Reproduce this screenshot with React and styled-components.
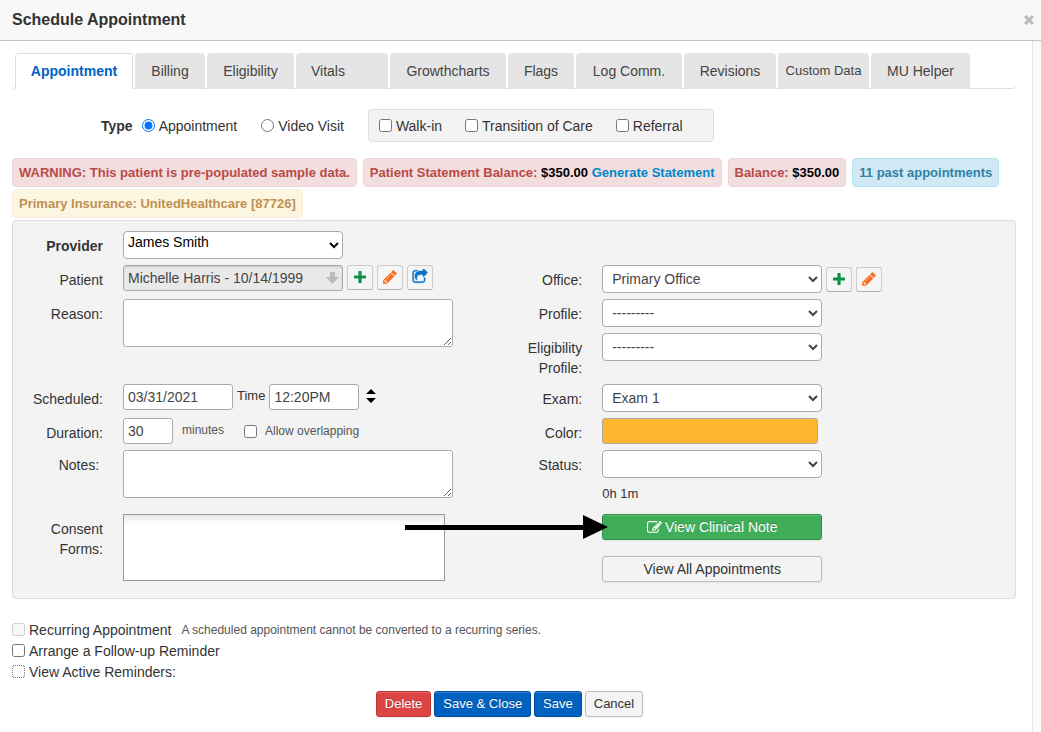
import React from "react";
import styled, { createGlobalStyle, css } from "styled-components";

const GlobalStyle = createGlobalStyle`
  * {
    box-sizing: border-box;
  }
  body {
    margin: 0;
    background: #fff;
    color: #333;
    font: 14px/20px "Liberation Sans", Arial, sans-serif;
  }
  button, input, select, textarea {
    margin: 0;
    font-family: inherit;
  }
`;

const Dialog = styled.div`
  display: flex;
  flex-direction: column;
  min-height: 100vh;
`;

const Header = styled.header`
  display: flex;
  align-items: center;
  justify-content: space-between;
  height: 41px;
  padding: 0 7px 0 12px;
  background: #f8f8f8;
  border-bottom: 1px solid #c4c4c4;
`;

const Title = styled.h1`
  margin: 0;
  font-size: 16px;
  line-height: 20px;
`;

const CloseButton = styled.button`
  display: flex;
  padding: 0;
  border: 0;
  background: none;
  color: #bbb;
`;

const Body = styled.div`
  display: flex;
  flex: 1;
`;

const Content = styled.main`
  flex: 1;
  min-width: 0;
  padding: 12px 16px 14px 12px;
`;

const Gutter = styled.div`
  width: 9px;
  background: #fafafa;
  border-left: 1px solid #e6e6e6;
`;

const Tabs = styled.nav`
  display: flex;
  gap: 2px;
  height: 36px;
  padding-left: 3px;
  border-bottom: 1px solid #ddd;
  border-radius: 0 0 4px 4px;
`;

const Tab = styled.button`
  width: ${(p) => p.$width}px;
  height: 36px;
  padding: 0;
  border: 0;
  border-radius: 4px 4px 0 0;
  background: #e5e5e5;
  color: #444;
  font-size: ${(p) => (p.$small ? 13 : 14)}px;
  line-height: 20px;
  white-space: nowrap;
  ${(p) => p.$loading && css`
    padding-right: 28px;
  `}
  ${(p) => p.$active && css`
    border: 1px solid #ddd;
    border-bottom-color: #fff;
    background: #fff;
    color: #0062c4;
    font-weight: bold;
  `}
`;

const TypeRow = styled.div`
  display: flex;
  align-items: center;
  gap: 24px;
  margin: 20px 0 16px;
  padding-left: 89px;
`;

const TypeGroup = styled.div`
  display: flex;
  align-items: center;
  gap: 9px;
`;

const Choice = styled.label`
  display: flex;
  align-items: center;
  gap: ${(p) => p.$gap || 4}px;
  color: ${(p) => (p.$small ? "#555" : "#333")};
  font-size: ${(p) => (p.$small ? 12 : 14)}px;
  white-space: nowrap;
  input {
    width: 13px;
    height: 13px;
  }
`;

const FlagBox = styled.div`
  display: flex;
  align-items: center;
  gap: 23px;
  height: 33px;
  padding: 0 30px 0 10px;
  border: 1px solid #ddd;
  border-radius: 4px;
  background: #f3f3f3;
`;

const Alerts = styled.div`
  display: flex;
  flex-wrap: wrap;
  gap: 2px 6px;
  margin-bottom: 2px;
`;

const tones = {
  danger: ["#f2dede", "#eed3d7", "#b94a48"],
  info: ["#d0e9f5", "#b0e4ee", "#2f82a6"],
  warning: ["#fcf6e0", "#fbeed5", "#c09053"],
};

const Alert = styled.div`
  height: 29px;
  padding: 0 6px;
  border: 1px solid ${(p) => tones[p.$tone][1]};
  border-radius: 4px;
  background: ${(p) => tones[p.$tone][0]};
  color: ${(p) => tones[p.$tone][2]};
  font-size: 13px;
  font-weight: bold;
  line-height: 27px;
  white-space: nowrap;
  b {
    color: #000;
  }
  a {
    color: #0088cc;
    text-decoration: none;
  }
`;

const Panel = styled.section`
  display: grid;
  grid-template-columns: 11fr 12fr;
  padding: 10px 0 16px;
  border: 1px solid #ddd;
  border-radius: 4px;
  background: #f3f3f3;
`;

const Column = styled.div`
  display: flex;
  flex-direction: column;
  min-width: 0;
  padding-top: ${(p) => p.$top || 0}px;
`;

const Row = styled.div`
  display: flex;
  align-items: flex-start;
  min-height: ${(p) => p.$height || 34}px;
`;

const RowLabel = styled.label`
  flex: none;
  width: 90px;
  margin-right: 20px;
  padding-top: 5px;
  text-align: right;
  font-weight: ${(p) => (p.$bold ? "bold" : "normal")};
`;

const Field = styled.div`
  position: relative;
  display: flex;
  gap: 4px;
`;

const control = css`
  border: 1px solid #aaa;
  border-radius: 4px;
  background: #fff;
  color: #444;
  font-size: 14px;
`;

const Select = styled.select`
  ${control}
  width: 220px;
  height: 28px;
  padding: 0 0 0 5px;
`;

const ProviderSelect = styled(Select)`
  padding: 0 0 6px;
  color: #000;
`;

const TextInput = styled.input`
  ${control}
  width: ${(p) => p.$width}px;
  height: 26px;
  padding: 0 4px;
  border-radius: 3px;
`;

const PatientInput = styled(TextInput)`
  background: #e9e9e9;
  box-shadow: inset 0 1px 2px rgba(0, 0, 0, 0.15);
`;

const PatientBox = styled.div`
  position: relative;
  height: 26px;
  svg {
    position: absolute;
    top: 7px;
    right: 4px;
  }
`;

const TextArea = styled.textarea`
  ${control}
  display: block;
  width: 330px;
  height: 48px;
  border-radius: 3px;
`;

const ConsentList = styled.div`
  width: 322px;
  height: 67px;
  border: 1px solid #999;
  background: #fff;
  box-shadow: inset 0 10px 10px -8px rgba(0, 0, 0, 0.15);
`;

const ColorInput = styled.input`
  width: 216px;
  height: 26px;
  border: 1px solid #aaa;
  border-radius: 3px;
  background: #ffb52e;
`;

const InlineLabel = styled.label`
  font-size: 13px;
  line-height: 24px;
`;

const Minutes = styled.span`
  margin: 0 16px 0 5px;
  color: #555;
  font-size: 12px;
  line-height: 24px;
`;

const Spinner = styled.button`
  display: flex;
  align-items: center;
  height: 24px;
  padding: 0 3px;
  border: 0;
  background: none;
`;

const IconButton = styled.button`
  display: flex;
  align-items: center;
  justify-content: center;
  width: 26px;
  height: 25px;
  margin-top: ${(p) => p.$drop || 0}px;
  padding: 0 0 2px;
  border: 1px solid #ccc;
  border-bottom-color: #b3b3b3;
  border-radius: 3px;
  background: #f5f5f5;
  color: ${(p) => p.$color};
`;

const buttonTones = {
  plain: ["#f4f4f4", "#bbb", "#333"],
  red: ["#dd4444", "#b93737", "#fff"],
  blue: ["#0062c0", "#004f9c", "#fff"],
  green: ["#40ae58", "#2f8f45", "#fff"],
};

const Button = styled.button`
  display: flex;
  align-items: center;
  justify-content: center;
  gap: 3px;
  width: ${(p) => (p.$wide ? "220px" : "auto")};
  height: 26px;
  padding: 0 8px;
  border: 1px solid ${(p) => buttonTones[p.$tone][1]};
  border-radius: 3px;
  background: ${(p) => buttonTones[p.$tone][0]};
  box-shadow: inset 0 1px 0 rgba(255, 255, 255, 0.2), 0 1px 2px rgba(0, 0, 0, 0.05);
  color: ${(p) => buttonTones[p.$tone][2]};
  font-size: ${(p) => (p.$wide ? 14 : 13)}px;
  line-height: 20px;
  text-shadow: ${(p) => (p.$tone === "plain" ? "none" : "0 -1px 0 rgba(0, 0, 0, 0.25)")};
`;

const Elapsed = styled.span`
  padding-top: 2px;
  font-size: 13px;
`;

const ButtonStack = styled.div`
  display: flex;
  flex-direction: column;
  gap: 16px;
  margin-left: 110px;
`;

const NoteAction = styled.div`
  position: relative;
`;

// runs from the consent list over to the clinical note button
const Pointer = styled.svg`
  position: absolute;
  top: 0;
  left: -197px;
  pointer-events: none;
`;

const Options = styled.div`
  margin-top: 20px;
`;

const OptionRow = styled.div`
  display: flex;
  align-items: center;
  gap: 10px;
  min-height: 21px;
`;

const Hint = styled.span`
  color: #555;
  font-size: 12px;
`;

const FocusedBox = styled.input`
  outline: 1px dotted #fff;
  outline-offset: -1px;
`;

const Footer = styled.footer`
  display: flex;
  justify-content: center;
  gap: 3px;
  margin-top: 9px;
  padding-right: 9px;
`;

const PlusIcon = () => (
  <svg width="12" height="12" viewBox="0 0 12 12" fill="currentColor">
    <path d="M5 0h2q.6 0 .6.6v3.8h3.8q.6 0 .6.6v2q0 .6-.6.6H7.600v3.800q0 .6-.6.6H5q-.6 0-.6-.6V7.600H.6Q0 7.600 0 7V5q0-.6.6-.6h3.800V.6Q4.400 0 5 0z" />
  </svg>
);

const PencilIcon = () => (
  <svg width="16" height="16" viewBox="0 0 1792 1792" fill="currentColor">
    <path d="M491 1536l91-91-235-235-91 91v107h128v128h107zM1014 608q0-22-22-22-10 0-17 7l-542 542q-7 7-7 17 0 22 22 22 10 0 17-7l542-542q7-7 7-17zM960 416l416 416-832 832h-416v-416zM1643 512q0 53-37 90l-166 166-416-416 166-165q36-38 90-38 53 0 91 38l235 234q37 39 37 91z" />
  </svg>
);

const ShareIcon = () => (
  <svg width="16" height="16" viewBox="0 0 1792 1792" fill="currentColor" stroke="currentColor" strokeWidth="50">
    <path d="M1472 989v259q0 119-84.5 203.5t-203.5 84.5h-832q-119 0-203.5-84.5t-84.5-203.5v-832q0-119 84.5-203.5t203.5-84.5h255q13 0 22.5 9.5t9.5 22.5q0 27-26 32-77 26-133 60-10 4-16 4h-112q-66 0-113 47t-47 113v832q0 66 47 113t113 47h832q66 0 113-47t47-113v-214q0-19 18-29 28-13 54-37 16-16 35-8 21 9 21 29zM1717 461l-384 384q-18 19-45 19-12 0-25-5-39-17-39-59v-192h-160q-323 0-438 131-119 137-74 473 3 23-20 34-8 2-12 2-16 0-26-13-10-14-21-31t-39.500-68.500-49.500-99.500-38.500-114-17.500-122q0-49 3.500-91t14-90 28-88 47-81.500 68.500-74 94.500-61.500 124.500-48.500 159.500-30.500 196.500-11h160v-192q0-42 39-59 13-5 25-5 26 0 45 19l384 384q19 19 19 45t-19 45z" />
  </svg>
);

const EditIcon = () => (
  <svg width="15" height="15" viewBox="0 0 1792 1792" fill="currentColor">
    <path d="M888 1184l116-116-152-152-116 116v56h96v96h56zM1328 464q-16-16-33 1l-350 350q-17 17-1 33t33-1l350-350q17-17 1-33zM1408 1058v190q0 119-84.5 203.5t-203.5 84.5h-832q-119 0-203.5-84.5t-84.5-203.5v-832q0-119 84.5-203.5t203.5-84.5h832q63 0 117 25 15 7 18 23 3 17-9 29l-49 49q-14 14-32 8-23-6-45-6h-832q-66 0-113 47t-47 113v832q0 66 47 113t113 47h832q66 0 113-47t47-113v-126q0-13 9-22l64-64q15-15 35-7t20 29zM1312 320l288 288-672 672h-288v-288zM1756 452l-92 92-288-288 92-92q28-28 68-28t68 28l152 152q28 28 28 68t-28 68z" />
  </svg>
);

const tabs = [
  { name: "Appointment", width: 118, active: true },
  { name: "Billing", width: 70 },
  { name: "Eligibility", width: 87 },
  { name: "Vitals", width: 92, loading: true },
  { name: "Growthcharts", width: 116 },
  { name: "Flags", width: 66 },
  { name: "Log Comm.", width: 106 },
  { name: "Revisions", width: 92 },
  { name: "Custom Data", width: 91, small: true },
  { name: "MU Helper", width: 99 },
];

function App() {
  return (
    <Dialog>
      <GlobalStyle />
      <Header>
        <Title>Schedule Appointment</Title>
        <CloseButton aria-label="Close">
          <svg width="10" height="10" viewBox="0 0 10 10" stroke="currentColor" strokeWidth="3">
            <path d="M1 1l8 8M9 1l-8 8" />
          </svg>
        </CloseButton>
      </Header>
      <Body>
        <Content>
          <Tabs>
            {tabs.map((t) => (
              <Tab key={t.name} $width={t.width} $active={t.active} $small={t.small} $loading={t.loading}>
                {t.name}
              </Tab>
            ))}
          </Tabs>

          <TypeRow>
            <TypeGroup>
              <b>Type</b>
              <Choice>
                <input type="radio" name="type" defaultChecked />
                Appointment
              </Choice>
            </TypeGroup>
            <Choice>
              <input type="radio" name="type" />
              Video Visit
            </Choice>
            <FlagBox>
              <Choice><input type="checkbox" />Walk-in</Choice>
              <Choice><input type="checkbox" />Transition of Care</Choice>
              <Choice><input type="checkbox" />Referral</Choice>
            </FlagBox>
          </TypeRow>

          <Alerts>
            <Alert $tone="danger">WARNING: This patient is pre-populated sample data.</Alert>
            <Alert $tone="danger">
              Patient Statement Balance: <b>$350.00</b> <a href="#statement">Generate Statement</a>
            </Alert>
            <Alert $tone="danger">Balance: <b>$350.00</b></Alert>
            <Alert $tone="info">11 past appointments</Alert>
            <Alert $tone="warning">Primary Insurance: UnitedHealthcare [87726]</Alert>
          </Alerts>

          <Panel>
            <Column>
              <Row>
                <RowLabel htmlFor="provider" $bold>Provider</RowLabel>
                <ProviderSelect id="provider"><option>James Smith</option></ProviderSelect>
              </Row>
              <Row>
                <RowLabel htmlFor="patient">Patient</RowLabel>
                <Field>
                  <PatientBox>
                    <PatientInput id="patient" $width={220} readOnly value="Michelle Harris - 10/14/1999" />
                    <svg width="13" height="12" viewBox="0 0 13 12" fill="#bbb">
                      <path d="M4 0h5v5h4l-6.500 7L0 5h4z" />
                    </svg>
                  </PatientBox>
                  <IconButton $color="#0e8f44" aria-label="Add patient"><PlusIcon /></IconButton>
                  <IconButton $color="#f96a1c" aria-label="Edit patient"><PencilIcon /></IconButton>
                  <IconButton $color="#0b74c9" aria-label="Open patient"><ShareIcon /></IconButton>
                </Field>
              </Row>
              <Row $height={85}>
                <RowLabel htmlFor="reason">Reason:</RowLabel>
                <TextArea id="reason" />
              </Row>
              <Row>
                <RowLabel htmlFor="scheduled">Scheduled:</RowLabel>
                <Field>
                  <TextInput id="scheduled" $width={110} defaultValue="03/31/2021" />
                  <InlineLabel htmlFor="time">Time</InlineLabel>
                  <TextInput id="time" $width={90} defaultValue="12:20PM" />
                  <Spinner aria-label="Change time">
                    <svg width="10" height="14" viewBox="0 0 10 14">
                      <path d="M5 0l5 5H0zM5 14l5-5H0z" />
                    </svg>
                  </Spinner>
                </Field>
              </Row>
              <Row $height={32}>
                <RowLabel htmlFor="duration">Duration:</RowLabel>
                <Field>
                  <TextInput id="duration" $width={50} defaultValue="30" />
                  <Minutes>minutes</Minutes>
                  <Choice $small $gap={8}><input type="checkbox" />Allow overlapping</Choice>
                </Field>
              </Row>
              <Row $height={64}>
                <RowLabel htmlFor="notes">Notes:&nbsp;</RowLabel>
                <TextArea id="notes" />
              </Row>
              <Row $height={67}>
                <RowLabel as="span">Consent Forms:</RowLabel>
                <ConsentList />
              </Row>
            </Column>

            <Column $top={34}>
              <Row>
                <RowLabel htmlFor="office">Office:</RowLabel>
                <Field>
                  <Select id="office"><option>Primary Office</option></Select>
                  <IconButton $drop={2} $color="#0e8f44" aria-label="Add office"><PlusIcon /></IconButton>
                  <IconButton $drop={2} $color="#f96a1c" aria-label="Edit office"><PencilIcon /></IconButton>
                </Field>
              </Row>
              <Row>
                <RowLabel htmlFor="profile">Profile:</RowLabel>
                <Select id="profile"><option>---------</option></Select>
              </Row>
              <Row $height={51}>
                <RowLabel htmlFor="eligibility">Eligibility Profile:</RowLabel>
                <Select id="eligibility"><option>---------</option></Select>
              </Row>
              <Row>
                <RowLabel htmlFor="exam">Exam:</RowLabel>
                <Select id="exam"><option>Exam 1</option></Select>
              </Row>
              <Row $height={32}>
                <RowLabel htmlFor="color">Color:</RowLabel>
                <ColorInput id="color" readOnly />
              </Row>
              <Row $height={32}>
                <RowLabel htmlFor="status">Status:</RowLabel>
                <Select id="status"><option></option></Select>
              </Row>
              <Row $height={32}>
                <RowLabel as="span" />
                <Elapsed>0h 1m</Elapsed>
              </Row>
              <ButtonStack>
                <NoteAction>
                  <Button $tone="green" $wide><EditIcon />View Clinical Note</Button>
                  <Pointer width="203" height="26" viewBox="0 0 203 26">
                    <path d="M0 11h178V1l25 12-25 12V16H0z" />
                  </Pointer>
                </NoteAction>
                <Button $tone="plain" $wide>View All Appointments</Button>
              </ButtonStack>
            </Column>
          </Panel>

          <Options>
            <OptionRow>
              <Choice><input type="checkbox" disabled />Recurring Appointment</Choice>
              <Hint>A scheduled appointment cannot be converted to a recurring series.</Hint>
            </OptionRow>
            <OptionRow>
              <Choice><input type="checkbox" />Arrange a Follow-up Reminder</Choice>
            </OptionRow>
            <OptionRow>
              <Choice><FocusedBox type="checkbox" />View Active Reminders:</Choice>
            </OptionRow>
          </Options>

          <Footer>
            <Button $tone="red">Delete</Button>
            <Button $tone="blue">Save &amp; Close</Button>
            <Button $tone="blue">Save</Button>
            <Button $tone="plain">Cancel</Button>
          </Footer>
        </Content>
        <Gutter />
      </Body>
    </Dialog>
  );
}

export default App;
